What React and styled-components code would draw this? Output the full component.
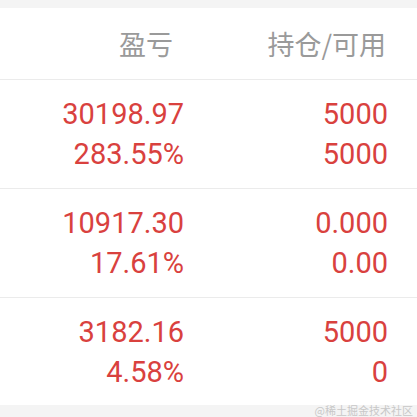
import React from 'react';
import styled, { createGlobalStyle } from 'styled-components';

const GlobalStyle = createGlobalStyle`
  html, body {
    margin: 0;
    padding: 0;
    background: #f4f4f4;
  }
  body {
    font-family: Roboto, "Noto Sans CJK SC", sans-serif;
  }
`;

const Page = styled.div`
  width: 417px;
  height: 417px;
  background: #f4f4f4;
  padding-top: 8px;
  box-sizing: border-box;
  position: relative;
  overflow: hidden;
`;

const Table = styled.div`
  background: #fff;
`;

const HeaderRow = styled.div`
  display: grid;
  grid-template-columns: 173px 213px;
  height: 71px;
  align-items: center;
  border-bottom: 1px solid #ebebeb;
`;

const HeadCell = styled.div`
  text-align: right;
  font-family: "Noto Sans CJK SC", sans-serif;
  font-size: 27px;
  color: #9a9a9a;
`;

const Row = styled.div`
  display: grid;
  grid-template-columns: 184px 204px;
  height: ${(p) => (p.last ? '107px' : '108px')};
  align-content: center;
  border-bottom: ${(p) => (p.last ? 'none' : '1px solid #ebebeb')};
`;

const Cell = styled.div`
  display: flex;
  flex-direction: column;
  align-items: flex-end;
`;

const Num = styled.span`
  font-family: Roboto, sans-serif;
  font-size: 29px;
  line-height: 40px;
  color: #d9413e;
`;

const Watermark = styled.div`
  position: absolute;
  right: 4px;
  bottom: 0px;
  font-family: "Noto Sans CJK SC", sans-serif;
  font-size: 11px;
  line-height: 14px;
  color: #c8c8c8;
`;

const rows = [
  { pnl: '30198.97', pct: '283.55%', hold: '5000', avail: '5000' },
  { pnl: '10917.30', pct: '17.61%', hold: '0.000', avail: '0.00' },
  { pnl: '3182.16', pct: '4.58%', hold: '5000', avail: '0' },
];

export default function App() {
  return (
    <Page>
      <GlobalStyle />
      <Table>
        <HeaderRow>
          <HeadCell>盈亏</HeadCell>
          <HeadCell>持仓/可用</HeadCell>
        </HeaderRow>
        {rows.map((r, i) => (
          <Row key={i} last={i === rows.length - 1}>
            <Cell>
              <Num>{r.pnl}</Num>
              <Num>{r.pct}</Num>
            </Cell>
            <Cell>
              <Num>{r.hold}</Num>
              <Num>{r.avail}</Num>
            </Cell>
          </Row>
        ))}
      </Table>
      <Watermark>@稀土掘金技术社区</Watermark>
    </Page>
  );
}
